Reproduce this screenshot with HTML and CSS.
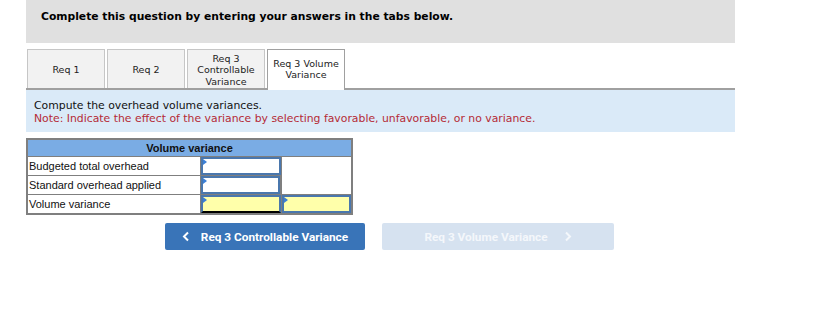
FILE: index.html
```html
<!DOCTYPE html>
<html>
<head>
    <meta charset="UTF-8">
    <title>Volume Variance</title>
    <link rel="stylesheet" href="styles.css">
</head>
<body>
    <div id="question-header">
        <p>Complete this question by entering your answers in the tabs below.</p>
    </div>

    <div id="tab-bar">
        <div class="tab">Req 1</div>
        <div class="tab">Req 2</div>
        <div class="tab">Req 3 Controllable Variance</div>
        <div class="tab active">Req 3 Volume Variance</div>
    </div>

    <div id="instructions">
        <p>Compute the overhead volume variances.</p>
        <p class="note">Note: Indicate the effect of the variance by selecting favorable, unfavorable, or no variance.</p>
    </div>

    <table id="answer-table">
        <colgroup>
            <col class="col-label">
            <col class="col-input">
            <col class="col-effect">
        </colgroup>
        <tr>
            <th colspan="3">Volume variance</th>
        </tr>
        <tr>
            <td class="label">Budgeted total overhead</td>
            <td class="cell-input"><div class="input-box"></div></td>
            <td class="blank" rowspan="2"></td>
        </tr>
        <tr>
            <td class="label">Standard overhead applied</td>
            <td class="cell-input"><div class="input-box"></div></td>
        </tr>
        <tr class="total-row">
            <td class="label">Volume variance</td>
            <td class="cell-input"><div class="input-box yellow underline"></div></td>
            <td class="cell-input"><div class="input-box yellow"></div></td>
        </tr>
    </table>

    <div id="nav-buttons">
        <button class="nav-btn prev">
            <svg width="8" height="11" viewBox="0 0 8 11"><path d="M6 1.5 L2 5.5 L6 9.5" fill="none" stroke="currentColor" stroke-width="2"/></svg>
            Req 3 Controllable Variance
        </button>
        <button class="nav-btn next" disabled>
            Req 3 Volume Variance
            <svg width="8" height="11" viewBox="0 0 8 11"><path d="M2 1.5 L6 5.5 L2 9.5" fill="none" stroke="currentColor" stroke-width="2"/></svg>
        </button>
    </div>
</body>
</html>
```

FILE: styles.css
```css
body {
    margin: 0;
    padding: 0;
    background-color: #fff;
    color: #000;
    font-family: "DejaVu Sans", Verdana, sans-serif;
}
#question-header {
    margin-left: 26px;
    width: 709px;
    height: 43px;
    background-color: #e0e0e0;
    box-sizing: border-box;
    padding: 10px 0 0 15px;
}
#question-header p {
    margin: 0;
    font-size: 10.75px;
    font-weight: bold;
}
#tab-bar { /* tabs sit on a grey rule */
    margin: 6px 0 0 26px;
    width: 709px;
    height: 41px;
    padding-left: 1px;
    box-sizing: border-box;
    display: flex;
    align-items: flex-start;
    gap: 2px;
    border-bottom: 2px solid #a0a0a0;
}
.tab {
    width: 78px;
    height: 39px;
    box-sizing: border-box;
    background-color: #f2f2f2;
    border: 1px solid #c6c6c6;
    border-bottom: none;
    display: flex;
    align-items: center;
    justify-content: center;
    text-align: center;
    font-size: 9.5px;
    line-height: 11.5px;
    color: #222;
    padding: 2px 4px 0;
}
.tab.active {
    background-color: #fff;
    border: 1px solid #a0a0a0;
    border-bottom: none;
    height: 41px;
    padding: 0 4px 2px;
}
#instructions {
    margin-left: 26px;
    width: 709px;
    height: 42px;
    box-sizing: border-box;
    background-color: #daeaf8;
    padding: 9px 0 0 8px;
    font-size: 10.85px;
    line-height: 13px;
    color: #111;
}
#instructions p {
    margin: 0;
}
#instructions .note {
    color: #b52a36;
}
#answer-table {
    margin: 6px 0 0 26px;
    border-collapse: collapse;
    table-layout: fixed;
    width: 325px;
    font-family: "Liberation Sans", Arial, sans-serif;
    font-size: 11px;
}
.col-label { width: 173px; }
.col-input { width: 81px; }
.col-effect { width: 71px; }
#answer-table th {
    background-color: #7aace4;
    border: 2px solid #7f7f7f;
    border-bottom-width: 1px;
    height: 16px;
    padding: 0;
    font-weight: bold;
    color: #111;
    text-align: center;
}
#answer-table td {
    border: 1px solid #7f7f7f;
    padding: 0;
    height: 18px;
}
#answer-table td:first-child { border-left-width: 2px; }
#answer-table td:last-child, #answer-table .blank { border-right-width: 2px; }
#answer-table .total-row td { border-bottom-width: 2px; }
#answer-table .label {
    padding-left: 1px;
    color: #111;
}
.input-box {
    position: relative;
    height: 18px;
    box-sizing: border-box;
    border: 2px solid #4a77ad;
    background-color: #fff;
}
.input-box::before { /* small blue marker in the corner */
    content: "";
    position: absolute;
    top: 0;
    left: 0;
    border-top: 3px solid transparent;
    border-bottom: 3px solid transparent;
    border-left: 4px solid #3b7fd6;
}
.input-box.yellow {
    background-color: #ffffaa;
}
.input-box.underline {
    border-bottom: 2px solid #000;
}
#nav-buttons {
    margin: 8px 0 0 165px;
    display: flex;
    gap: 17px;
}
.nav-btn {
    height: 27px;
    border: none;
    border-radius: 2px;
    font-family: Roboto, "Liberation Sans", sans-serif;
    font-weight: bold;
    font-size: 11.8px;
    display: flex;
    align-items: center;
    justify-content: center;
    gap: 11px;
    cursor: pointer;
}
.nav-btn.prev {
    width: 200px;
    background-color: #3974b8;
    color: #fff;
}
.nav-btn.next {
    width: 232px;
    background-color: #d6e2f0;
    color: #f4f7fb;
    cursor: default;
    gap: 16px;
}
```
